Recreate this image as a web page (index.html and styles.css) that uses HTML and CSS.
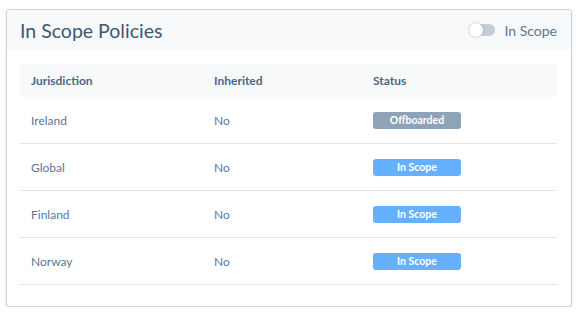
FILE: index.html
```html
<!DOCTYPE html>
<html lang="en">
<head>
  <meta charset="UTF-8" />
  <title>In Scope Policies</title>
  <link rel="stylesheet" href="styles.css">
</head>
<body>
  <div class="card">
    <div class="card-head">
      <h2>In Scope Policies</h2>
      <label class="switch">
        <span class="track"><span class="knob"></span></span>
        <span class="switch-label">In Scope</span>
      </label>
    </div>

    <div class="card-body">
      <table>
        <thead>
          <tr>
            <th class="col-j">Jurisdiction</th>
            <th class="col-i">Inherited</th>
            <th>Status</th>
          </tr>
        </thead>
        <tbody>
          <tr>
            <td>Ireland</td>
            <td>No</td>
            <td><span class="badge off">Offboarded</span></td>
          </tr>
          <tr>
            <td>Global</td>
            <td>No</td>
            <td><span class="badge on">In Scope</span></td>
          </tr>
          <tr>
            <td>Finland</td>
            <td>No</td>
            <td><span class="badge on">In Scope</span></td>
          </tr>
          <tr>
            <td>Norway</td>
            <td>No</td>
            <td><span class="badge on">In Scope</span></td>
          </tr>
        </tbody>
      </table>
    </div>
  </div>
</body>
</html>
```

FILE: styles.css
```css
body {
  margin: 0;
  padding: 9px 7px 0 6px;
  font-family: 'Lato', 'Open Sans', sans-serif;
  background: #fff;
  color: #5a7898;
}

.card {
  border: 1px solid #c9d3de;
  border-radius: 3px;
  box-shadow: 0 1px 2px rgba(120, 140, 165, 0.35);
  background: #fff;
  overflow: hidden;
}

.card-head {
  display: flex;
  align-items: center;
  justify-content: space-between;
  height: 40px;
  padding: 0 14px 0 13px;
  background: #f7f9fb;
}

.card-head h2 {
  margin: 0;
  font-size: 19.5px;
  font-weight: 400;
  color: #3e5874;
}

.switch {
  display: flex;
  align-items: center;
  gap: 10px;
}

.track {
  position: relative;
  width: 26px;
  height: 12px;
  border-radius: 6px;
  background: #c5ced8;
}

.knob {
  position: absolute;
  left: 0;
  top: -1px;
  width: 14px;
  height: 14px;
  border-radius: 50%;
  background: #fff;
  box-shadow: 0 0 2px rgba(60, 80, 100, 0.45);
}

.switch-label {
  font-size: 14px;
  color: #5b7795;
}

.card-body {
  padding: 14px 14px 21px 13px;
}

table {
  width: 100%;
  border-collapse: collapse;
  font-size: 12px;
}

th {
  height: 33px;
  padding: 0 0 0 11px;
  background: #f7f9fb;
  text-align: left;
  font-size: 12px;
  font-weight: 700;
  color: #4c6886;
}

.col-j {
  width: 172px;
}

.col-i {
  width: 148px;
}

td {
  height: 46px;
  padding: 0 0 0 11px;
  border-bottom: 1px solid #e2e6eb;
  color: #5a7898;
}

.badge {
  display: inline-block;
  width: 88px;
  height: 17px;
  line-height: 17px;
  border-radius: 3px;
  text-align: center;
  font-size: 10.5px;
  font-weight: 700;
  color: #fff;
}

.badge.off {
  background: #8ea3b8;
}

.badge.on {
  background: #66b1ff;
}
```
